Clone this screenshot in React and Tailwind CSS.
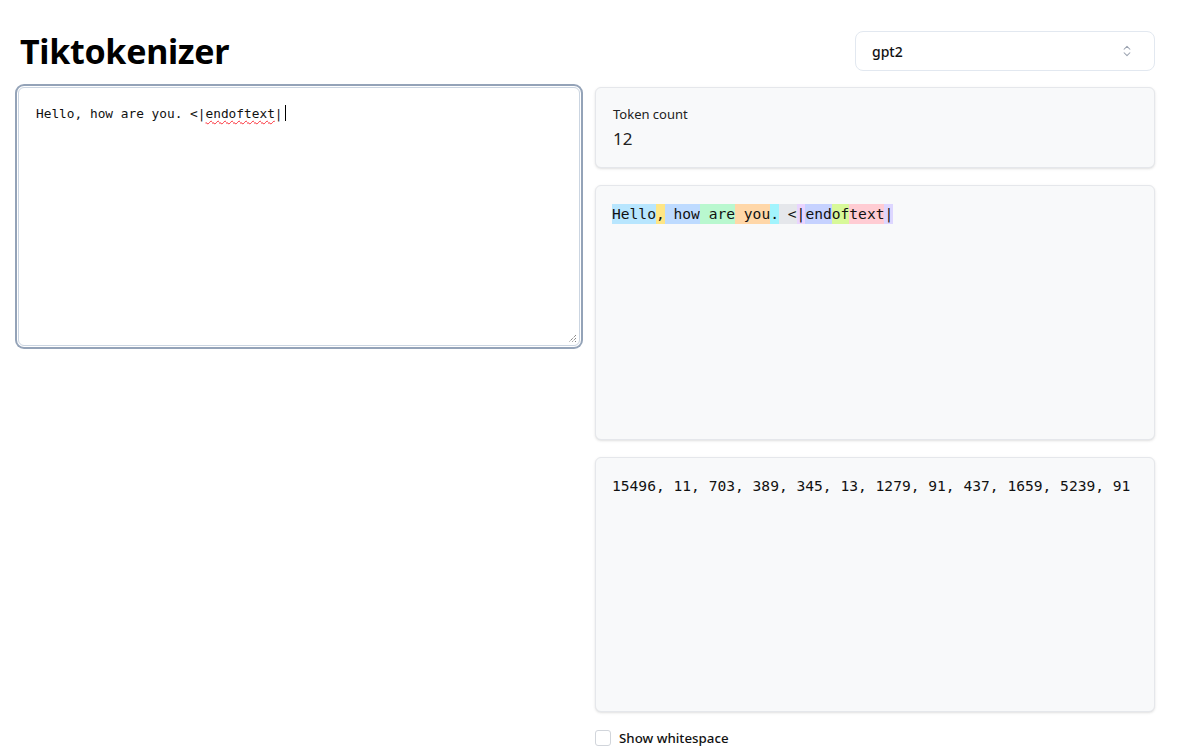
import React from "react";
import { ChevronsUpDown } from "lucide-react";

const tokens = [
  { t: "Hello", c: "bg-sky-200" },
  { t: ",", c: "bg-amber-200" },
  { t: " how", c: "bg-blue-200" },
  { t: " are", c: "bg-green-200" },
  { t: " you", c: "bg-orange-200" },
  { t: ".", c: "bg-cyan-200" },
  { t: " <", c: "bg-gray-200" },
  { t: "|", c: "bg-purple-200" },
  { t: "end", c: "bg-indigo-200" },
  { t: "of", c: "bg-lime-200" },
  { t: "text", c: "bg-rose-200" },
  { t: "|", c: "bg-violet-200" },
];

const ids = [15496, 11, 703, 389, 345, 13, 1279, 91, 437, 1659, 5239, 91];

const sans = { fontFamily: '"Noto Sans", "Open Sans", sans-serif' };
const mono = { fontFamily: '"DejaVu Sans Mono", "Liberation Mono", monospace' };

export default function App() {
  return (
    <div className="min-h-[750px] bg-white text-[#111] pl-[18px] pr-[27px] pt-[31px]" style={sans}>
      <div className="flex h-10 items-center justify-between">
        <h1 className="pl-[2px] text-[34px] font-bold leading-10 tracking-[-0.3px] text-black">Tiktokenizer</h1>
        <div className="flex h-10 w-[300px] items-center justify-between rounded-lg border border-[#e2e8f0] bg-white pl-4 pr-5">
          <span className="text-[14px] font-medium text-[#111]">gpt2</span>
          <ChevronsUpDown className="h-[14px] w-[14px] text-gray-400" strokeWidth={1.8} />
        </div>
      </div>

      <div className="mt-[16px] flex gap-[15px]">
        <div className="w-[562px]">
          <div className="relative h-[259px] rounded-md border border-[#cbd5e1] bg-white px-4 pb-4 pt-[14px] shadow-[0_0_0_1px_#ffffff,0_0_0_3px_#94a3b8]">
            <div className="whitespace-pre pl-[1px] text-[12.8px] leading-5 text-[#111]" style={mono}>
              Hello, how are you. &lt;|<span className="underline decoration-wavy decoration-red-500 decoration-1 underline-offset-2">endoftext</span>|<span className="ml-[2px] inline-block h-[16px] w-px translate-y-[3px] bg-black"></span>
            </div>
            <svg className="absolute bottom-[2px] right-[2px]" width="9" height="9" viewBox="0 0 9 9">
              <path d="M8 1 L1 8 M8 4 L4 8 M8 7 L7 8" stroke="#555" strokeWidth="1" strokeDasharray="1 1" />
            </svg>
          </div>
        </div>

        <div className="flex w-[560px] flex-col">
          <div className="h-[81px] rounded-md border border-[#e5e7eb] bg-[#f8f9fa] px-[17px] py-[16px] shadow-sm">
            <div className="text-[13px] leading-5 text-[#222]">Token count</div>
            <div className="mt-[3px] text-[17px] leading-6 text-[#222]">12</div>
          </div>

          <div className="mt-[17px] h-[255px] rounded-md border border-[#e5e7eb] bg-[#f8f9fa] px-4 py-[18px] shadow-sm">
            <div className="flex flex-wrap text-[14.6px] text-[#111]" style={mono}>
              {tokens.map((tk, i) => (
                <span key={i} className={`inline-block h-5 whitespace-pre leading-5 ${tk.c}`}>{tk.t}</span>
              ))}
            </div>
          </div>

          <div className="mt-[17px] h-[255px] rounded-md border border-[#e5e7eb] bg-[#f8f9fa] px-4 py-4 shadow-sm">
            <div className="text-[14.6px] leading-6 text-[#111]" style={mono}>
              {ids.join(", ")}
            </div>
          </div>

          <label className="mt-[16px] flex items-center gap-2">
            <span className="h-4 w-4 rounded-[3px] border border-[#d1d5db] bg-white"></span>
            <span className="text-[13.3px] font-medium leading-5 text-[#111]">Show whitespace</span>
          </label>
        </div>
      </div>
    </div>
  );
}
